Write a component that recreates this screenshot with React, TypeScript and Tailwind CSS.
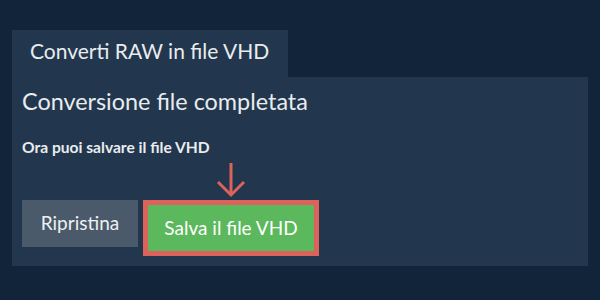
export default function App() {
  return (
    <div
      className="w-[600px] h-[300px] bg-[#11243a] pt-[30px] px-[12px] text-[#e9ecef]"
      style={{ fontFamily: "Lato, 'Noto Sans', sans-serif" }}
    >
      {/* tab */}
      <div className="w-[276px] h-[47px] bg-[#22374d] pl-[18px] pt-[8px] text-[21px] leading-[26px]">
        Converti RAW in file VHD
      </div>

      {/* panel */}
      <div className="h-[189px] bg-[#22374d] px-[10px] pt-[10px]">
        <h1 className="text-[23.4px] leading-[28px]">Conversione file completata</h1>
        <p className="mt-[23px] text-[15.6px] leading-[18px] font-bold">Ora puoi salvare il file VHD</p>

        <div className="mt-[44px] flex items-start gap-[5px]">
          <button className="w-[116px] h-[47px] bg-[#4b5a6b] text-[19px] text-[#eef0f2]">
            Ripristina
          </button>
          <div className="relative">
            <svg
              className="absolute left-[73px] top-[-38px]"
              width="30"
              height="36"
              viewBox="0 0 30 36"
              fill="none"
              stroke="#dc625c"
              strokeWidth="3"
            >
              <line x1="15" y1="1" x2="15" y2="33" />
              <polyline points="2,20 15,33 28,20" />
            </svg>
            <div className="border-[5px] border-[#dc625c]">
              <button className="w-[166px] h-[46px] bg-[#5cb85c] text-[19px] text-white">
                Salva il file VHD
              </button>
            </div>
          </div>
        </div>
      </div>
    </div>
  );
}
